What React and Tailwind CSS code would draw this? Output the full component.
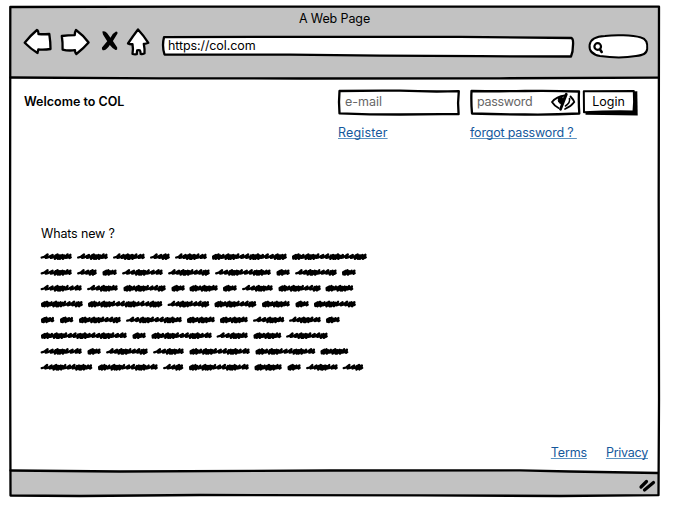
const INK = '#000';

/* Each row lists [startX, endX] of the scribbled words on that line. */
const SCRIBBLES = [
  [256.6, [[40.5, 72], [77, 108], [113, 145], [150, 170], [175, 207], [211.5, 287], [291.5, 367]]],
  [272.4, [[40.5, 72], [77, 97], [102, 117], [122, 163], [168, 210], [215, 271], [276, 290], [295, 337], [341.5, 356]]],
  [288.2, [[40.5, 82], [87, 118], [123, 166], [171, 185], [189, 218], [222.5, 237], [242, 273], [278, 321], [325, 353.5]]],
  [304, [[40.5, 83], [87.5, 162.5], [167.5, 209.5], [214, 256.5], [261.5, 290], [295, 309], [313.5, 356]]],
  [319.8, [[40.5, 54.5], [59.5, 73.5], [78.5, 121], [126, 182], [186.5, 215], [219.5, 248], [253, 284.5], [289, 321], [325.5, 340]]],
  [335.6, [[40.5, 127], [132, 146], [151, 212], [216.5, 248], [253, 281.5], [286, 328]]],
  [351.4, [[40.5, 82], [87, 101], [106, 148], [153, 184], [189, 250], [255, 315.5], [320, 348.5]]],
  [367.2, [[40.5, 92.5], [97.5, 158], [163, 183.5], [188.5, 249], [254, 282], [287, 301], [306, 338], [342.5, 363.5]]],
];

function wordPath([a, b], y) {
  const w = b - a;
  const dense = w < 16 || (w > 27 && w < 30) || (w > 42 && w < 44) || w > 59;
  const n = Math.max(2, Math.round((w - 5) / 4.9));
  const step = (w - 6.5) / n;
  let x = a + 1.2;
  let d = dense
    ? `M${x + 3.2} ${y - 1.7} L${x + 0.4} ${y - 0.2} L${x + 0.6} ${y + 2} L${x + 3} ${y + 0.9}`
    : `M${x} ${y + 0.9} L${x + 2.5} ${y + 0.3}`;
  for (let i = 0; i < n; i++) {
    const heavy = (dense && i === 0) || i % 5 === 2 || i % 5 === 3;
    const top = y - (i % 2 ? 1.7 : 2.2);
    d += ` L${x + step + 0.9} ${top} L${x + step - 0.9} ${y + 1.3} L${x + step + 1.4} ${y + 0.7}`;
    if (heavy) {
      d += ` L${x + step - 1.2} ${y - 1.2} L${x + step - 1.8} ${y + 2.3} L${x + step + 2.6} ${y - 1.2} L${x + step + 1.2} ${y + 2.3}`;
    }
    x += step;
  }
  return d + ` L${b - 1.6} ${y - 1.8} L${b - 2.4} ${y + 1.4} L${b - 1.3} ${y + 0.7}`;
}

function Ink({ box, className = '', children }) {
  return (
    <svg
      viewBox={box}
      className={`overflow-visible ${className}`}
      fill="none"
      stroke={INK}
      strokeWidth="2.3"
      strokeLinejoin="round"
      strokeLinecap="round"
      aria-hidden="true"
    >
      {children}
    </svg>
  );
}

function Link({ children, className = '' }) {
  return (
    <a
      href="#"
      className={`whitespace-pre leading-4 text-[#14589c] underline decoration-[#5c93c2] decoration-1 underline-offset-[1px] [text-decoration-skip-ink:none] ${className}`}
    >
      {children}
    </a>
  );
}

function Toolbar() {
  return (
    <header className="h-[71px] bg-[#c2c2c2] pt-1">
      <div className="text-center leading-4 tracking-[-0.1px]">A Web Page</div>
      <nav className="flex items-start pl-[13px]">
        <Ink box="23 28 30 28" className="mt-px h-7 w-[30px]">
          <path fill="#fff" d="M24.7 42.7Q31 35 37 30Q38.4 30.500 38.500 34.200Q44 34.300 49.300 34Q50.500 42 50.500 49Q44 50 38.300 49.400L37.500 53Q31 49 24.700 42.700Z" />
        </Ink>
        <Ink box="60 28 31 28" className="ml-[7px] mt-px h-7 w-[31px]">
          <path fill="#fff" d="M61.800 36Q68 35.500 74.700 35.200Q75 31.500 76 30Q83 35 88.600 42.500Q84 48 76.300 54Q75 53 75 50.200Q68 51 62.600 49.600Q62.800 42 61.800 36Z" />
        </Ink>
        <Ink box="100 28 19 28" className="ml-[9px] mt-px h-7 w-[19px]">
          <path stroke="none" fill="#000" d="M102.300 31.500Q105 30.500 107 33L110.500 37.700Q113 33 116 31.600Q118 31.500 117.500 33.500L112.900 41L117.200 47.500Q117.700 50.500 115.500 50Q112.500 48.500 109.800 45Q107 49.500 104 50.300Q101.500 50.500 102 47.500L107.200 41.200L103 34.500Z" />
        </Ink>
        <Ink box="125 28 26 28" className="ml-1.5 mt-px h-7 w-[26px]">
          <path fill="#fff" d="M138 29.500Q144 36 148.300 42.800Q146 44 143.800 43.800Q144.800 49 144.500 53.300Q142.500 54.500 140.700 54Q140.500 51 139.800 50.300Q138.500 49.800 137.200 50.300Q136.800 52 136.800 54.200Q134.500 54.500 132.500 54Q133.400 49 132.500 44.200Q130 44.500 128 43.500Q133 36 138 29.500Z" />
        </Ink>
        <div className="relative ml-[11px] mt-2 h-[23px] w-[412px] pl-1.5 pt-[3px] leading-4">
          <Ink box="162 35 412 23" className="absolute inset-0 h-full w-full">
            <path fill="#fff" d="M164 37.200L300 36.800L460 36.800L571.500 38Q573.500 39 573 45Q573 52 571 56.500L480 56.200L380 55.700L290 54.600L164.500 54.500Q161.800 46 164 37.200Z" />
          </Ink>
          <span className="relative tracking-[-0.1px]">https://col.com</span>
        </div>
        <Ink box="588 33 61 26" className="ml-3.5 mt-1.5 h-[26px] w-[61px]">
          <path fill="#fff" strokeWidth="2" d="M589.600 45C590.500 39 597 36.300 605 36C615 34.600 632 35 641 37.500C647 39 647.700 44 647.200 49C646.500 54 643 55 636 56C625 58 610 57.500 600 56C592 54.500 589 50 589.600 45Z" />
          <circle cx="597.700" cy="46.500" r="3.300" strokeWidth="2.200" />
          <path d="M600 49.500L601.700 52" strokeWidth="2.600" />
        </Ink>
      </nav>
    </header>
  );
}

function LoginForm() {
  return (
    <>
      <div className="flex w-[132px] flex-col items-start">
        <div className="relative h-[26px] w-[122px] pl-[7px] pt-[5px] leading-4 text-[#666]">
          <Ink box="338 89 122 26" className="absolute inset-0 h-full w-full">
            <path fill="#fff" d="M339.500 91Q370 90.500 400 90.700Q430 92 458.800 91.200Q457.500 103 458.600 114.200Q430 114 400 114.500Q370 114.500 339.500 113.300Q338.500 102 339.500 91Z" />
          </Ink>
          <span className="relative">e-mail</span>
        </div>
        <Link className="mt-[10px] tracking-[0.15px]">Register</Link>
      </div>
      <div className="flex w-28 flex-col items-start">
        <div className="relative flex h-[26px] w-[111px] items-start justify-between pl-[7px] pr-[5px] pt-[5px] leading-4 text-[#666]">
          <Ink box="470 89 111 26" className="absolute inset-0 h-full w-full">
            <path fill="#fff" d="M471.500 91Q500 91.500 525 91Q550 90.500 579 91.500Q578.500 102 579.300 113.500Q550 115 525 114.500Q500 114.500 472 113.500Q471 102 471.500 91Z" />
          </Ink>
          <span className="relative tracking-[-0.3px]">password</span>
          <Ink box="551 93 25 18" className="relative -mt-px h-[18px] w-[25px]">
            <path strokeWidth="1.800" d="M552 102Q556.500 96.500 565 95.500M552 102Q554.500 106 558.500 108M570.500 96.500Q573 99 574.300 102Q571 106.500 565 109" />
            <path fill="#000" strokeWidth="1" d="M558.500 98.500Q560 96.500 562 97L562.500 99L565.500 96L562.500 104.500Q557 103 558.500 98.500Z" />
            <path strokeWidth="2.800" d="M566.300 94.200L560.500 109.200" />
            <path strokeWidth="1.600" d="M569.500 98.500Q570.500 102.500 565.500 106" />
          </Ink>
        </div>
        <Link className="mt-[10px] tracking-[-0.18px]">{'forgot password ? '}</Link>
      </div>
      <button className="relative flex h-[27px] w-[57px] items-start justify-center pr-1 pt-[5px] leading-4">
        <Ink box="582 89 57 27" className="absolute inset-0 h-full w-full">
          <path fill="#000" stroke="none" d="M585.500 93L637.300 91.300L637.700 115.500L585.500 114.700Z" />
          <path fill="#fff" d="M583.800 91.300L633.800 91Q634.500 102 633.500 111.500Q610 111 584 112.300Z" strokeWidth="2" />
        </Ink>
        <span className="relative">Login</span>
      </button>
    </>
  );
}

export default function App() {
  return (
    <div className="relative h-[507px] w-[673px] overflow-hidden bg-white pl-2.5 pt-[7px] font-['Inter','Liberation_Sans',sans-serif] text-[12.5px] text-black">
      <div className="flex h-[488px] w-[649px] flex-col">
        <Toolbar />
        <main className="flex flex-1 flex-col pt-[11px]">
          <section className="flex items-start pl-3.5">
            <h1 className="mt-[5px] w-[314px] font-semibold leading-4">Welcome to COL</h1>
            <LoginForm />
          </section>
          <h2 className="ml-[31px] mt-[85px] leading-4 tracking-[-0.15px]">Whats new ?</h2>
          <Ink box="40 250 330 122" className="ml-[30px] mt-[8px] h-[122px] w-[330px] shrink-0">
            {SCRIBBLES.map(([y, words]) =>
              words.map((w) => <path key={`${y}-${w[0]}`} d={wordPath(w, y)} strokeWidth="2.300" />)
            )}
          </Ink>
          <div className="mb-[11px] mr-[11px] mt-auto flex justify-end gap-[19px]">
            <Link className="tracking-[-0.15px]">Terms</Link>
            <Link className="tracking-[-0.25px]">Privacy</Link>
          </div>
        </main>
        <footer className="flex h-[23px] items-start justify-end bg-[#c2c2c2] pr-[3px]">
          <Ink box="638 478 18 15" className="mt-[6px] h-[15px] w-[18px]">
            <path d="M641 487L646.500 481.500M644.500 490L653.500 482.500" strokeWidth="3.200" />
          </Ink>
        </footer>
      </div>
      <Ink box="0 0 673 507" className="pointer-events-none absolute inset-0 h-full w-full">
        <path fill="#c2c2c2" stroke="none" d="M10 471L150 471L400 470L560 471.500L659 473V476H10Z" />
        <path d="M10.300 7L180 6.700L659 6.700L658.700 200L659 400L658.500 495.200L560 496L420 495.300L200 495L80 496L10.500 495.500L10 300L10.300 7Z" />
        <path d="M10.500 77.500L160 78.300L300 78.500L500 78.300L658 77.700M10.500 470.500L120 471.500L330 470.500L520 470.300L570 471.500L658 473" />
      </Ink>
    </div>
  );
}
